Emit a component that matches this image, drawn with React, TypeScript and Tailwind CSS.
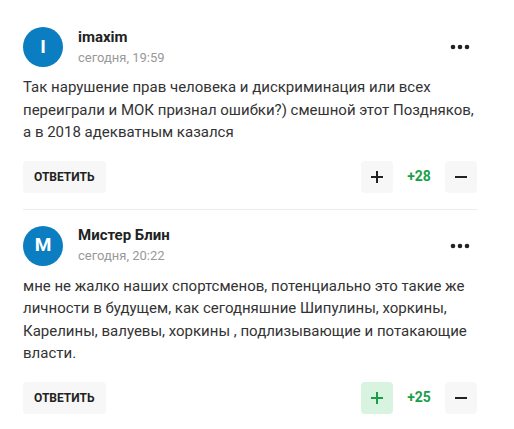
const comments = [
  {
    letter: "I",
    name: "imaxim",
    time: "сегодня, 19:59",
    text: "Так нарушение прав человека и дискриминация или всех переиграли и МОК признал ошибки?) смешной этот Поздняков, а в 2018 адекватным казался",
    rating: "+28",
    liked: false,
  },
  {
    letter: "M",
    name: "Мистер Блин",
    time: "сегодня, 20:22",
    text: "мне не жалко наших спортсменов, потенциально это такие же личности в будущем, как сегодняшние Шипулины, хоркины, Карелины, валуевы, хоркины , подлизывающие и потакающие власти.",
    rating: "+25",
    liked: true,
  },
]

function Dots() {
  return (
    <svg width="20" height="6" viewBox="0 0 20 6" className="text-[#222]">
      <circle cx="3" cy="3" r="2.3" fill="currentColor" />
      <circle cx="10" cy="3" r="2.3" fill="currentColor" />
      <circle cx="17" cy="3" r="2.3" fill="currentColor" />
    </svg>
  )
}

function Plus({ color }: { color: string }) {
  return (
    <svg width="14" height="14" viewBox="0 0 14 14">
      <path d="M7 1v12M1 7h12" stroke={color} strokeWidth="2" />
    </svg>
  )
}

function Minus() {
  return (
    <svg width="14" height="14" viewBox="0 0 14 14">
      <path d="M1 7h12" stroke="#222" strokeWidth="2" />
    </svg>
  )
}

function Comment({ c, first }: { c: (typeof comments)[number]; first: boolean }) {
  return (
    <div className={`${first ? "pt-[27px]" : "pt-4"} pb-4 border-b border-[#ececec]`}>
      <div className="flex items-center h-10">
        <div className="w-10 h-10 rounded-full bg-[#0b7dc1] flex items-center justify-center text-white font-bold text-[19px]">
          {c.letter}
        </div>
        <div className="ml-[15px] flex-1">
          <div className="text-[15px] font-bold text-[#222] leading-[18px]">{c.name}</div>
          <div className="text-[13px] text-[#999] leading-[18px] mt-[3px]">{c.time}</div>
        </div>
        <div className="mr-[7px] flex items-center">
          <Dots />
        </div>
      </div>
      <p className="mt-[9px] text-[15px] leading-[22.5px] text-[#333]">{c.text}</p>
      <div className="mt-[17px] flex items-center justify-between">
        <button className="h-8 px-[11px] rounded bg-[#f7f7f7] text-[12px] font-bold text-[#222] uppercase">
          Ответить
        </button>
        <div className="flex items-center">
          <button
            className={`w-8 h-8 rounded flex items-center justify-center ${c.liked ? "bg-[#d9f3e1]" : "bg-[#f7f7f7]"}`}
          >
            <Plus color={c.liked ? "#1a9f48" : "#222"} />
          </button>
          <span className="w-[52px] text-center text-[14px] font-bold text-[#1a9f48]">{c.rating}</span>
          <button className="w-8 h-8 rounded bg-[#f7f7f7] flex items-center justify-center">
            <Minus />
          </button>
        </div>
      </div>
    </div>
  )
}

export default function App() {
  return (
    <main className="w-[514px] h-[429px] bg-white overflow-hidden" style={{ fontFamily: "Roboto, sans-serif" }}>
      <div className="pl-[23px] pr-[37px]">
        {comments.map((c, i) => (
          <Comment key={c.name} c={c} first={i === 0} />
        ))}
      </div>
    </main>
  )
}
